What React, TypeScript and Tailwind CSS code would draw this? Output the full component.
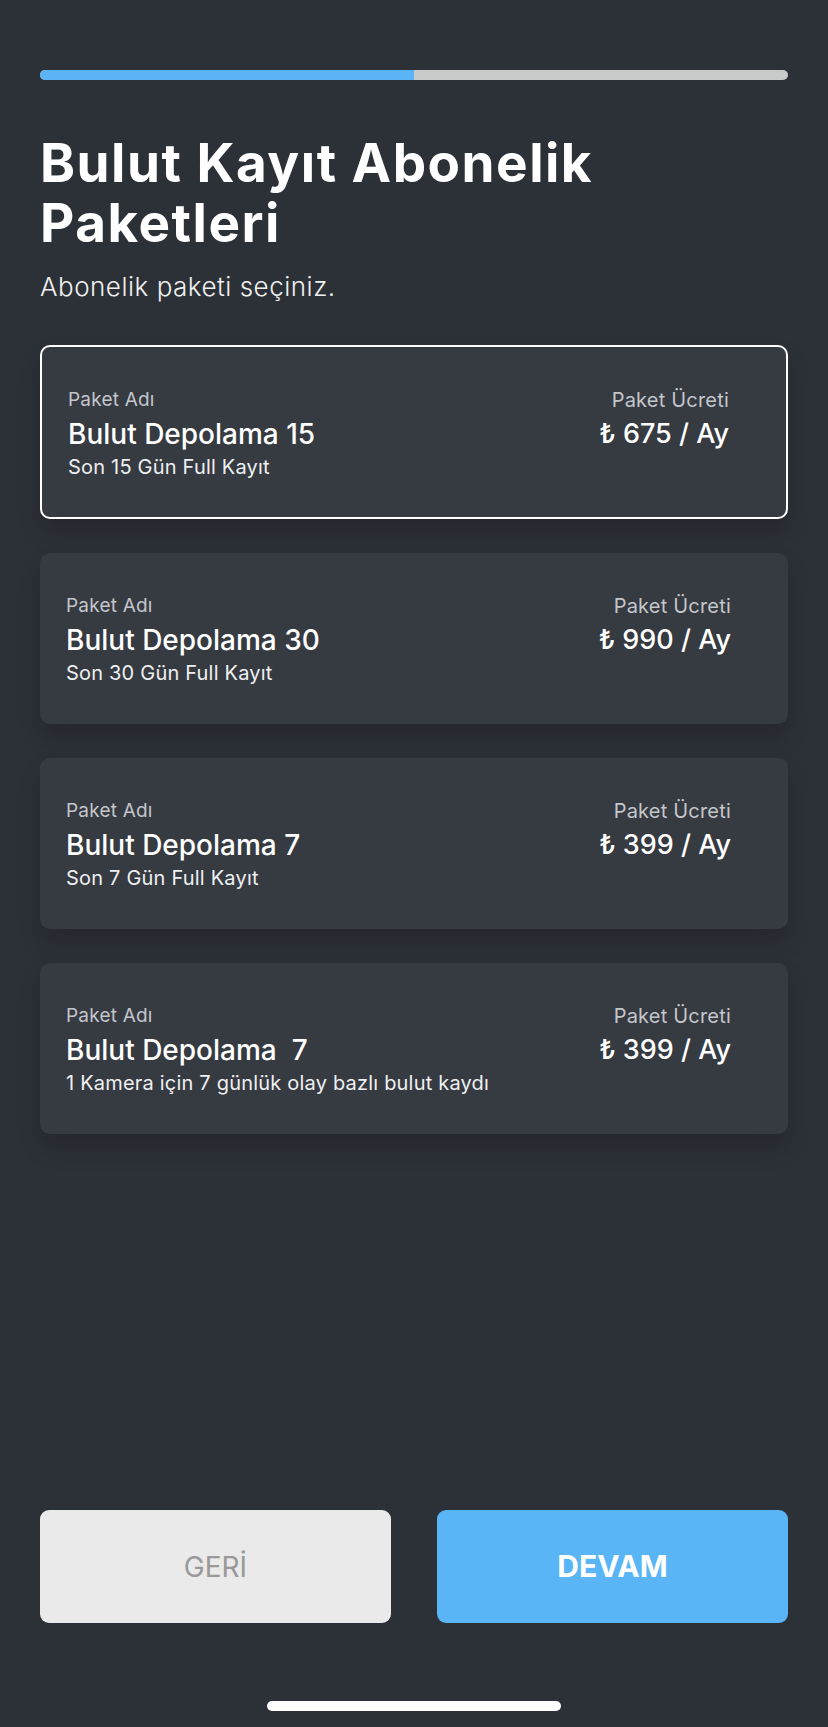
const packages = [
  { name: 'Bulut Depolama 15', desc: 'Son 15 Gün Full Kayıt', price: '₺ 675 / Ay' },
  { name: 'Bulut Depolama 30', desc: 'Son 30 Gün Full Kayıt', price: '₺ 990 / Ay' },
  { name: 'Bulut Depolama 7', desc: 'Son 7 Gün Full Kayıt', price: '₺ 399 / Ay' },
  { name: 'Bulut Depolama  7', desc: '1 Kamera için 7 günlük olay bazlı bulut kaydı', price: '₺ 399 / Ay' },
];

function PackageCard({ name, desc, price, selected }: { name: string; desc: string; price: string; selected: boolean }) {
  return (
    <div
      className={`flex items-start justify-between rounded-[10px] bg-[#363a41] pt-[41px] pl-[26px] pr-[57px] shadow-[0_14px_24px_rgba(0,0,0,0.16)] ${
        selected ? 'h-[174px] border-2 border-white' : 'h-[171px]'
      }`}
    >
      <div className="flex flex-col">
        <span className="text-[19px] leading-[24px] tracking-[0.2px] text-[#c3c6cb]">Paket Adı</span>
        <span className="mt-[5px] whitespace-pre text-[28px] leading-[34px] font-medium text-white">{name}</span>
        <span className="mt-[4px] text-[20px] leading-[24px] tracking-[0.2px] text-[#eef0f2]">{desc}</span>
      </div>
      <div className="flex flex-col items-end">
        <span className="text-[20px] leading-[24px] tracking-[0.2px] text-[#c3c6cb]">Paket Ücreti</span>
        <span className="mt-[5px] text-[27px] leading-[34px] font-medium text-white">{price}</span>
      </div>
    </div>
  );
}

export default function App() {
  return (
    <div
      className="flex h-[1727px] w-full flex-col bg-[#2c3037] px-[40px]"
      style={{ fontFamily: 'Inter, "Noto Sans", sans-serif' }}
    >
      <div className="mt-[70px] flex h-[10px] w-full overflow-hidden rounded-full bg-[#c9cbca]">
        <div className="h-full w-1/2 bg-[#5ab4f5]" />
      </div>

      <h1 className="mt-[53px] text-[53px] leading-[60px] font-bold tracking-[1.5px] text-white">
        Bulut Kayıt Abonelik
        <br />
        Paketleri
      </h1>
      <p className="mt-[18px] text-[26px] leading-[32px] font-light tracking-[0.5px] text-[#f0f0f0]">
        Abonelik paketi seçiniz.
      </p>

      <div className="mt-[42px] flex flex-col gap-[34px]">
        {packages.map((p, i) => (
          <PackageCard key={i} {...p} selected={i === 0} />
        ))}
      </div>

      <div className="flex-1" />

      <div className="flex gap-[46px]">
        <button className="flex h-[113px] flex-1 items-center justify-center rounded-[9px] bg-[#eaeaea] text-[28px] text-[#999999]">
          GERİ
        </button>
        <button className="flex h-[113px] flex-1 items-center justify-center rounded-[9px] bg-[#5ab5f6] text-[30px] font-bold text-white">
          DEVAM
        </button>
      </div>

      <div className="mx-auto mt-[78px] mb-[16px] h-[10px] w-[294px] rounded-full bg-white" />
    </div>
  );
}
